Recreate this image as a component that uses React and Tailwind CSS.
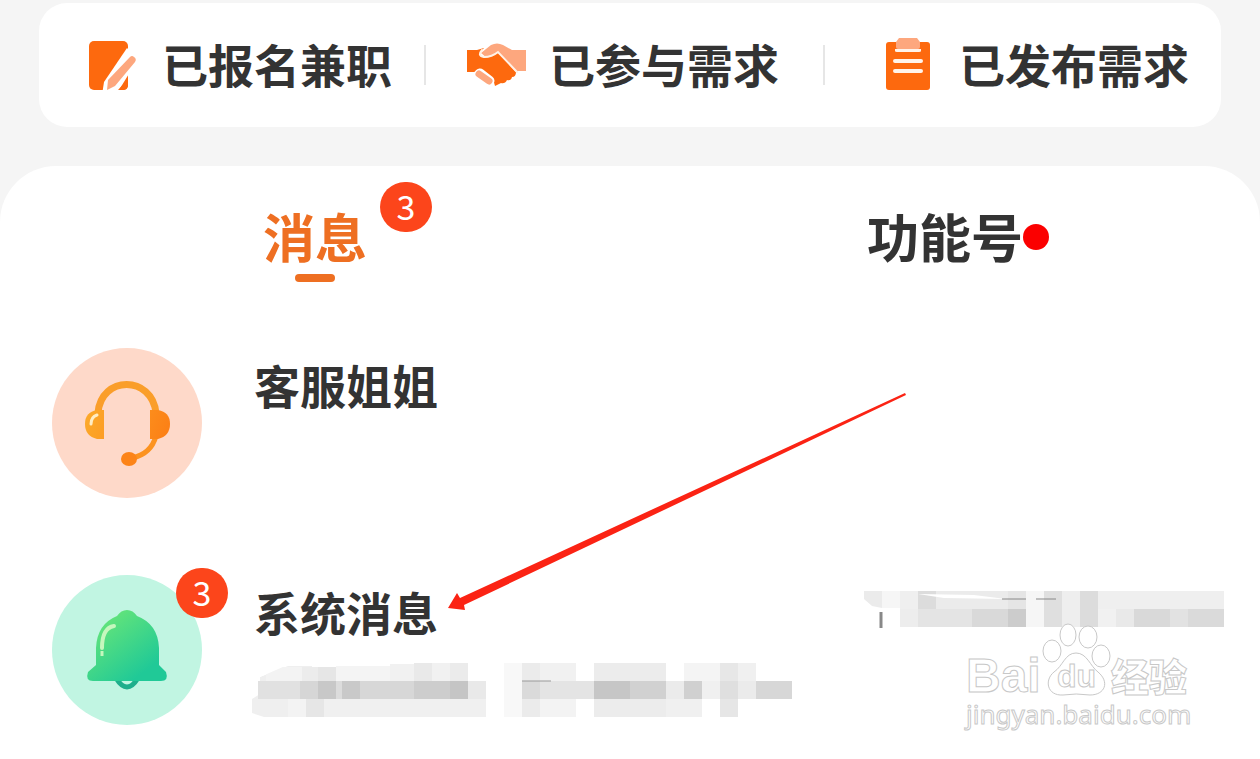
import React from 'react';

const SignedUpIcon = () => (
    <svg viewBox="0 0 64 64" className="w-16 h-16 shrink-0" aria-hidden="true">
        <rect x="11" y="8" width="39" height="49" rx="5" fill="#fd690e" />
        <path d="M49 15 L60 26 L38 62 L24 62 L26 49 Z" fill="#fff" />
        <path d="M50 46 V52 Q50 57 45 57 H40 Z" fill="#fd690e" />
        <path d="M52 24 Q54 22 56 24 Q59 26 57 29 L37 53 L29 57 L30 47 Z" fill="#fda77e" />
    </svg>
);

const HandshakeIcon = () => (
    <svg viewBox="0 0 64 64" className="w-16 h-16 shrink-0" aria-hidden="true">
        <path d="M16 20 L26 12 Q32 9 38 12 L47 17 H61 V38 H52 L31 22 L22 25 Z" fill="#fda77e" />
        <path d="M2 17 H12 L19 15 L15 20 Q16 26 24 24 L33 20 L51 39 Q51 44 47 44 Q46 48 42 47 Q40 51 36 50 L30 53 L28 46 L16 36 L9 39 H2 Z" fill="#fd690e" />
        <path d="M17 17 Q12 23 19 24 Q27 24 33 19 L52 39" fill="none" stroke="#fff1e6" strokeWidth="2" strokeLinecap="round" />
        <path d="M15 41 L24 48" stroke="#fff" strokeWidth="11" strokeLinecap="round" />
        <path d="M14 41 L24 48" stroke="#fda77e" strokeWidth="7" strokeLinecap="round" />
    </svg>
);

const ClipboardIcon = () => (
    <svg viewBox="0 0 64 64" className="w-16 h-16 shrink-0" aria-hidden="true">
        <rect x="11" y="9" width="44" height="48" rx="3" fill="#fd690e" />
        <path d="M20 16 H46 V18 Q46 19 44 19 H22 Q20 19 20 18 Z" fill="#fff3ea" />
        <path d="M21 9 L24 5 H42 L45 9 V14 Q45 16 43 16 H23 Q21 16 21 14 Z" fill="#fda77e" />
        <path d="M20 28 H46 M20 38 H46" stroke="#fff3ea" strokeWidth="4" strokeLinecap="round" />
    </svg>
);

const HeadsetIcon = () => (
    <svg viewBox="0 0 150 150" className="w-full h-full" aria-hidden="true">
        <defs>
            <linearGradient id="headset" gradientUnits="userSpaceOnUse" x1="33" y1="60" x2="118" y2="95">
                <stop offset="0" stopColor="#fcab2b" />
                <stop offset="1" stopColor="#fc7d14" />
            </linearGradient>
        </defs>
        <path d="M46 65 C49 27 100 27 104 65" fill="none" stroke="#fa9e2a" strokeWidth="7" />
        <path d="M104 88 Q99 106 80 110" fill="none" stroke="#fc9320" strokeWidth="5" />
        <path d="M52 62 V91 H45 Q33 88 33 76 Q33 64 45 62 Z" fill="url(#headset)" />
        <path d="M98 62 V91 H106 Q118 88 118 76 Q118 64 106 62 Z" fill="url(#headset)" />
        <ellipse cx="77" cy="111" rx="8" ry="7" fill="#fc8418" />
        <path d="M39 76 Q39 69 45 67" fill="none" stroke="#ffedc4" strokeWidth="3" strokeLinecap="round" />
    </svg>
);

const BellIcon = () => (
    <svg viewBox="0 0 150 150" className="w-full h-full" aria-hidden="true">
        <defs>
            <linearGradient id="bell" x1="0.2" y1="0.1" x2="0.8" y2="0.8">
                <stop offset="0.1" stopColor="#5ee27c" />
                <stop offset="1" stopColor="#20c997" />
            </linearGradient>
        </defs>
        <path d="M64 103 Q75 121 86 103" fill="none" stroke="#1fae8c" strokeWidth="5" />
        <path d="M75 35 Q81 35 85 41 Q106 49 107 73 V90 L114 97 Q117 106 109 106 H41 Q33 106 36 97 L44 90 V73 Q45 49 65 41 Q69 35 75 35 Z" fill="url(#bell)" />
        <path d="M50 73 Q50 53 62 51" fill="none" stroke="#c5f7bd" strokeWidth="4" strokeLinecap="round" />
        <path d="M50 76 V81" stroke="#c5f7bd" strokeWidth="3" />
    </svg>
);

// [x, y, width, height, fill]
const previewBlocks = [
    [14, 4, 52, 14, '#f3f3f3'],
    [50, 4, 16, 14, '#ececec'],
    [66, 4, 18, 14, '#e6e6e6'],
    [84, 3, 78, 15, '#f4f4f4'],
    [138, 1, 24, 17, '#f1f1f1'],
    [162, 0, 18, 18, '#e9e9e9'],
    [180, 0, 18, 18, '#f1f1f1'],
    [198, 0, 18, 18, '#ebebeb'],
    [6, 18, 42, 18, '#e1e1e1'],
    [48, 18, 18, 18, '#d6d6d6'],
    [66, 18, 18, 18, '#c8c8c8'],
    [84, 18, 6, 18, '#dcdcdc'],
    [90, 18, 18, 18, '#c9c9c9'],
    [108, 18, 54, 18, '#d7d7d7'],
    [162, 18, 36, 18, '#cdcdcd'],
    [198, 18, 18, 18, '#c5c5c5'],
    [216, 18, 18, 18, '#e9e9e9'],
    [36, 36, 18, 18, '#f3f3f3'],
    [54, 36, 18, 18, '#e6e6e6'],
    [72, 36, 162, 18, '#f0f0f0'],
    [252, 0, 18, 54, '#f8f8f8'],
    [270, 0, 18, 18, '#ebebeb'],
    [288, 0, 36, 18, '#f1f1f1'],
    [342, 0, 72, 18, '#ececec'],
    [432, 0, 36, 18, '#f4f4f4'],
    [468, 0, 18, 18, '#e7e7e7'],
    [486, 0, 18, 18, '#f0f0f0'],
    [270, 18, 18, 18, '#dadada'],
    [288, 18, 54, 18, '#e4e4e4'],
    [342, 18, 36, 18, '#c6c6c6'],
    [378, 18, 36, 18, '#d1d1d1'],
    [414, 18, 18, 18, '#ebebeb'],
    [432, 18, 18, 18, '#d0d0d0'],
    [450, 18, 18, 18, '#f0f0f0'],
    [468, 18, 18, 18, '#dfdfdf'],
    [486, 18, 18, 18, '#ebebeb'],
    [504, 18, 36, 18, '#d7d7d7'],
    [270, 36, 18, 18, '#ebebeb'],
    [288, 36, 36, 18, '#f3f3f3'],
    [342, 36, 72, 18, '#ececec'],
    [414, 36, 36, 18, '#f0f0f0'],
    [468, 36, 18, 18, '#e6e6e6'],
];

const timeBlocks = [
    [18, 0, 18, 17, '#f6f6f6'],
    [36, 0, 18, 18, '#efefef'],
    [54, 0, 18, 18, '#dcdcdc'],
    [72, 0, 72, 18, '#ebebeb'],
    [144, 0, 18, 18, '#e5e5e5'],
    [162, 0, 18, 36, '#f6f6f6'],
    [180, 0, 18, 36, '#dfdfdf'],
    [198, 0, 18, 36, '#eeeeee'],
    [216, 0, 18, 36, '#dcdcdc'],
    [234, 0, 126, 18, '#efefef'],
    [36, 18, 18, 18, '#ededed'],
    [54, 18, 54, 18, '#e4e4e4'],
    [108, 18, 36, 18, '#d9d9d9'],
    [144, 18, 18, 18, '#cccccc'],
    [234, 18, 18, 18, '#f1f1f1'],
    [252, 18, 18, 18, '#e9e9e9'],
    [270, 18, 36, 18, '#d9d9d9'],
    [306, 18, 18, 18, '#e2e2e2'],
    [324, 18, 36, 18, '#dadada'],
];

const Blocks = ({ blocks }) =>
    blocks.map(([x, y, w, h, fill]) => (
        <rect key={`${x}-${y}`} x={x} y={y} width={w} height={h} fill={fill} />
    ));

const PreviewMosaic = () => (
    <svg viewBox="0 0 540 54" className="w-[540px] h-[54px]" role="img" aria-label="hidden message">
        <path d="M0 36 L8 31 V14 L36 3 H60 V54 H12 L0 50 Z" fill="#efefef" />
        <Blocks blocks={previewBlocks} />
        <path d="M0 0 H40 L8 14 V18 H0 Z" fill="#fff" />
        <path d="M270 18 H299" stroke="#999" />
    </svg>
);

const TimeMosaic = () => (
    <svg viewBox="0 0 360 38" className="w-[360px] h-[38px]" role="img" aria-label="hidden time">
        <path d="M0 0 H18 V17 L8 15 L0 8 Z" fill="#ebebeb" />
        <Blocks blocks={timeBlocks} />
        <path d="M54 3 L110 4 L142 8 L80 7 Z" fill="#fff" />
        <path d="M138 8 H162 M172 8 H192" stroke="#888" />
        <path d="M17 21 V37" stroke="#888" strokeWidth="3" />
    </svg>
);

const Watermark = () => (
    <svg
        viewBox="0 0 240 110"
        className="absolute right-[60px] bottom-7 w-[240px] h-[110px] pointer-events-none font-['Liberation_Sans','Noto_Sans_CJK_SC',sans-serif]"
        fill="#fff"
        stroke="#c8c8c8"
    >
        <text x="6" y="71" fontSize="48" fontWeight="700">Bai</text>
        <ellipse cx="92" cy="30" rx="9" ry="11" />
        <ellipse cx="108" cy="14" rx="8" ry="11" />
        <ellipse cx="128" cy="16" rx="9" ry="11" />
        <ellipse cx="141" cy="35" rx="9" ry="11" />
        <path d="M116 32 C127 32 130 45 138 51 C150 61 145 74 130 74 Q116 72 103 74 C87 75 84 59 94 51 C103 45 105 32 116 32 Z" />
        <text x="97" y="66" fontSize="32" fontWeight="700">du</text>
        <text x="151" y="70" fontSize="38" fontWeight="900">经验</text>
        <text x="6" y="103" fontSize="26" className="font-['Noto_Sans',sans-serif]">jingyan.baidu.com</text>
    </svg>
);

const Badge = ({ count, className }) => (
    <span className={`absolute w-[52px] h-[50px] rounded-full bg-[#fc451b] text-white text-[34px] leading-[48px] font-normal text-center ${className}`}>
        {count}
    </span>
);

const shortcuts = [
    { label: '已报名兼职', icon: SignedUpIcon, className: 'pr-8' },
    { label: '已参与需求', icon: HandshakeIcon, className: 'pr-11' },
    { label: '已发布需求', icon: ClipboardIcon, className: 'pr-8' },
];

const conversations = [
    { name: '客服姐姐', icon: HeadsetIcon, color: 'bg-[#fed9c9]' },
    { name: '系统消息', icon: BellIcon, color: 'bg-[#c1f5e2]', unread: 3, hasPreview: true },
];

export default function App() {
    return (
        <div className="min-h-screen flex flex-col bg-[#f5f5f5] pt-[3px] text-[#333] font-['Noto_Sans_CJK_SC',sans-serif] overflow-hidden">
            <nav className="mx-[39px] h-[124px] rounded-[28px] bg-white grid grid-cols-[385fr_399fr_398fr] items-center">
                {shortcuts.map(({ label, icon: Icon, className }, idx) => (
                    <button
                        key={label}
                        type="button"
                        className={`h-10 flex items-center justify-end gap-5 text-[46px] leading-[46px] font-bold whitespace-nowrap ${idx > 0 ? 'border-l-2 border-[#e6e6e6]' : ''} ${className}`}
                    >
                        <Icon />
                        <span className="pb-1">{label}</span>
                    </button>
                ))}
            </nav>

            <main className="relative mt-[39px] flex-1 rounded-t-[56px] bg-white">
                <div className="grid grid-cols-2 justify-items-center pt-[44px]">
                    <button type="button" className="relative flex flex-col items-center text-[52px] leading-[52px] font-bold text-[#ee6f22]">
                        消息
                        <span className="mt-3 w-10 h-2 rounded-full bg-[#ee6f22]"></span>
                        <Badge count={3} className="left-[117px] -top-7" />
                    </button>
                    <button type="button" className="relative self-start text-[52px] leading-[52px] font-bold">
                        功能号
                        <span className="absolute left-full top-[14px] w-[26px] h-[26px] rounded-full bg-[#fb0000]"></span>
                    </button>
                </div>

                <ul className="mt-[66px] pl-[52px] pr-9 flex flex-col gap-[77px]">
                    {conversations.map(({ name, icon: Icon, color, unread, hasPreview }) => (
                        <li key={name} className="flex">
                            <div className={`relative w-[150px] h-[150px] shrink-0 rounded-full ${color}`}>
                                <Icon />
                                {unread && <Badge count={unread} className="left-[124px] -top-[7px]" />}
                            </div>
                            <div className="ml-[50px] pt-[13px] flex-1">
                                <h2 className="ml-[2px] text-[46px] leading-[46px] font-bold">{name}</h2>
                                {hasPreview && <div className="mt-[29px]"><PreviewMosaic /></div>}
                            </div>
                            {hasPreview && <div className="mt-4 -ml-40"><TimeMosaic /></div>}
                        </li>
                    ))}
                </ul>

                {/* Pointer to the system messages row */}
                <svg viewBox="0 0 460 218" className="absolute left-[447px] top-[226px] w-[460px] h-[218px] pointer-events-none" aria-hidden="true">
                    <path d="M1 216 L10 201 L13 206 L458 1 L459 3 L17 213 L18 218 Z" fill="#fb2314" />
                </svg>
                <Watermark />
            </main>
        </div>
    );
}
